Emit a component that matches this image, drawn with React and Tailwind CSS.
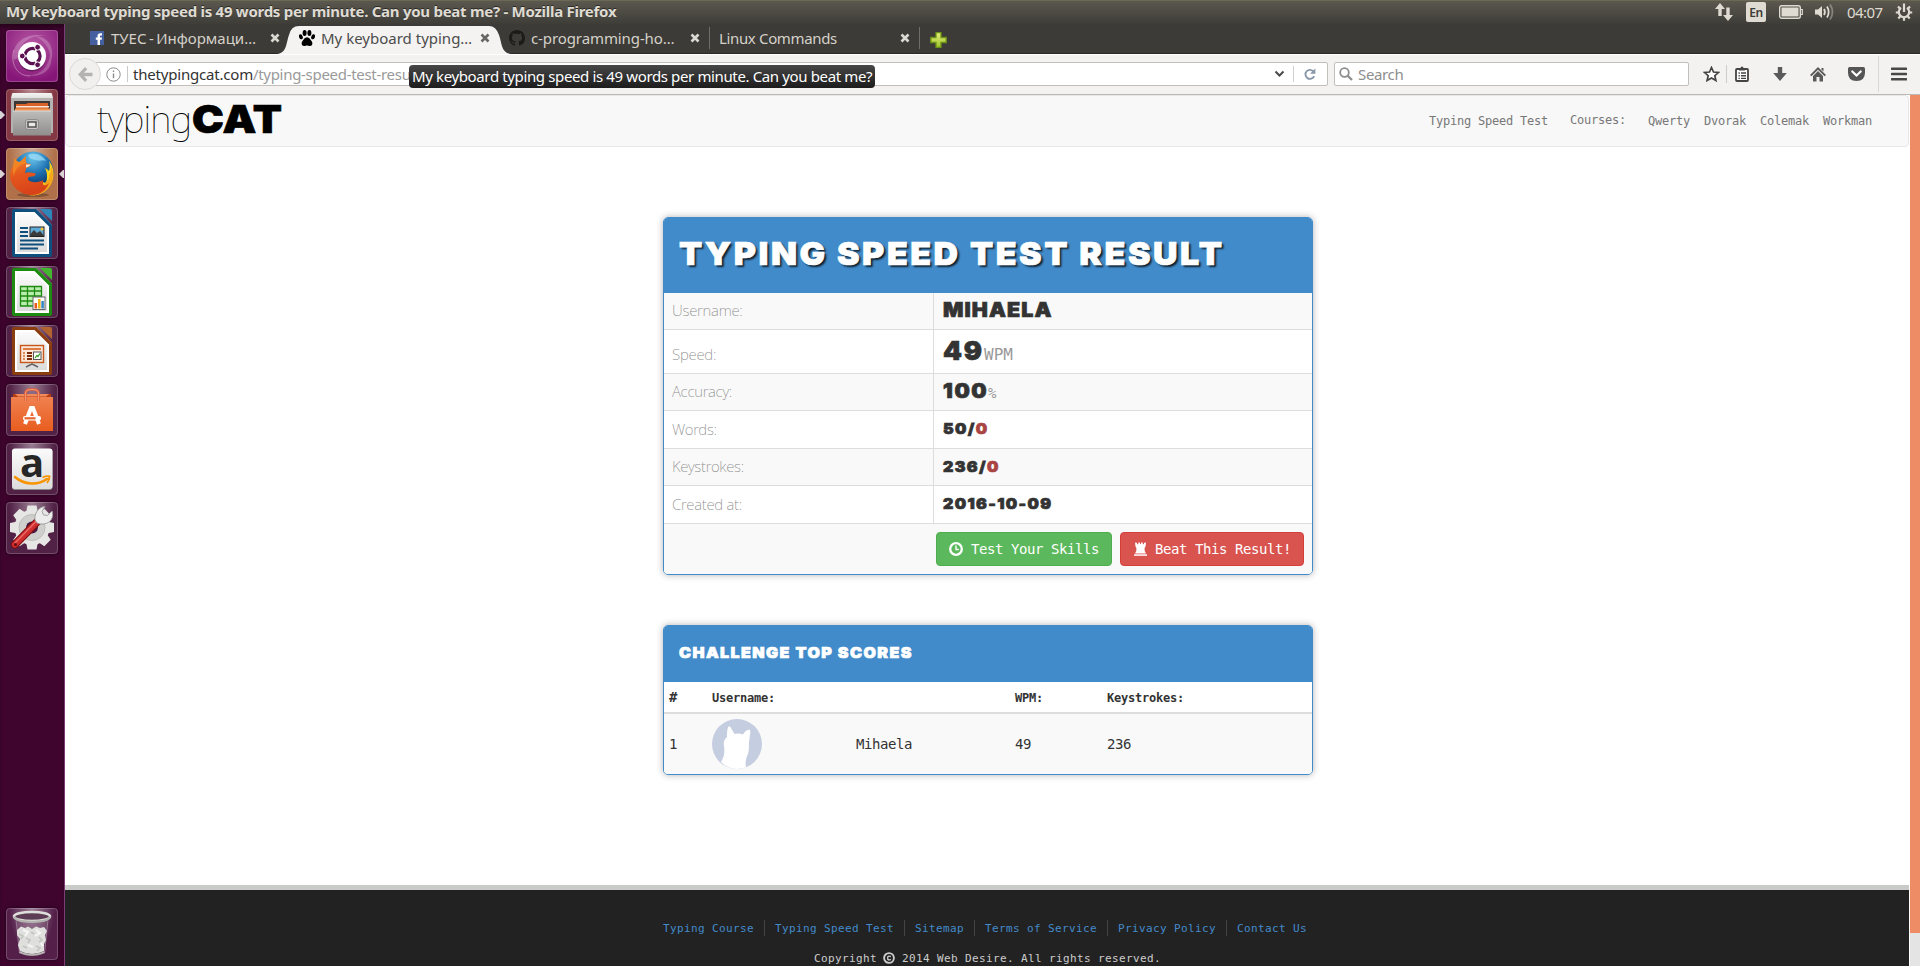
import React from "react";

const UI = "font-['Noto_Sans',sans-serif]";
const MONO = "font-['DejaVu_Sans_Mono',monospace]";
const DISPLAY = "inline-block origin-left font-['Inter',sans-serif] font-black [-webkit-text-stroke:0.7px]";

/* ---------- launcher icons ---------- */

const UbuntuIcon = () => (
  <g>
    <rect x="0" y="0" width="52" height="52" rx="3" fill="url(#dash)" />
    <path d="M8 30C4 12 22 2 40 6C26 4 12 12 12 28ZM44 22C50 40 34 50 18 44C32 48 44 38 44 22ZM28 6C44 6 50 20 44 34C46 22 40 10 28 6Z" fill="#fff" opacity=".22" />
    <path d="M24 46C10 46 4 32 8 20" stroke="#fff" strokeWidth="1" opacity=".35" fill="none" />
    <circle cx="26" cy="27.500" r="14" fill="#2b0a28" opacity=".4" />
    <circle cx="26" cy="26" r="14" fill="#fff" />
    <circle cx="26.500" cy="26" r="7.600" fill="none" stroke="#5b1250" strokeWidth="3.200" />
    <path d="M26.500 26L14 26M26.500 26L33 15M26.500 26L33 37" stroke="#fff" strokeWidth="1.600" />
    <circle cx="26.500" cy="26" r="5.500" fill="#fff" />
    <circle cx="16.300" cy="26" r="2.900" fill="#5b1250" stroke="#fff" strokeWidth="1" />
    <circle cx="31.600" cy="17.200" r="2.900" fill="#5b1250" stroke="#fff" strokeWidth="1" />
    <circle cx="31.600" cy="34.800" r="2.900" fill="#5b1250" stroke="#fff" strokeWidth="1" />
  </g>
);

const FilesIcon = () => (
  <g>
    <path d="M6 5Q6 4 7 4H45Q46 4 46 5L47 9V44H5V9Z" fill="url(#steel)" />
    <rect x="5" y="9" width="42" height="35" fill="#b5b3b1" />
    <rect x="8" y="12" width="36" height="12" fill="#3b3835" />
    <path d="M10 15H20L22 14H42V24H10Z" fill="#d9622a" />
    <rect x="10" y="17" width="33" height="1.500" fill="#f6e6d8" />
    <rect x="9" y="19.500" width="35" height="4" fill="#ef9450" />
    <path d="M7 22H45V46.500H7Z" fill="url(#steel2)" />
    <path d="M7 22H45" stroke="#dcdcdb" />
    <rect x="19.500" y="30.500" width="13" height="10" rx="2.500" fill="#c9c9c8" stroke="#8c8b89" />
    <rect x="22" y="33" width="8" height="5" fill="#e9e9e8" stroke="#3e3d3b" strokeWidth="1.300" />
  </g>
);

const FirefoxIcon = () => (
  <g>
    <ellipse cx="27" cy="47" rx="16" ry="2" fill="#000" opacity=".25" />
    <circle cx="27" cy="24" r="20.500" fill="url(#globe)" />
    <path d="M22 7C29 4 36 7 40 13C36 11 34 14 30 12C26 11 23 11 22 7Z" fill="#9edcf5" opacity=".75" />
    <path d="M43 13C48 19 49 28 45 36C40 45 31 48.500 23 47C32 45 36 40 37 34C39 36 41 34 41 30C41 26 41 24 39 20C41 21 42 22 43 23C44 20 44 17 43 13Z" fill="#fbd31c" />
    <path d="M45 18C49 27 47 38 38 44C34 46.500 29 48 24 47C33 45 38 40 39 35C42 33 44 30 43 26C45 27 45 22 45 18Z" fill="#f5a51a" />
    <path d="M9 10C10 13 12 14 14 14L20 8C20 11 19 14 21 15.500L25 16C25 18 22 19 20 20.500C20 22 19 24 19 25C23 23 26 25 30 25.500C29 29 26 28 23 29C21 30 22 33 25 33.500C29 35 34 34 37 32C36 38 39 39 43 35C40 43 33 47.500 25 47C14 46.500 4 38 4 27C4 22 6 19 8 17C8 14 8 12 9 10Z" fill="url(#fox)" />
    <path d="M9 10C10 13 12 14 14 14L20 8C19 11 19 14 21 15.500C15 15 9 20 8 28C6 23 7 15 9 10Z" fill="#f58a22" opacity=".8" />
    <path d="M20 16.500H25C24 18 22 19 20 19.500Z" fill="#fbe3c5" />
  </g>
);

const Doc = ({ dark, light, children }) => (
  <g>
    <path d="M6 4Q6 2 8 2H30L46 18V48Q46 50 44 50H8Q6 50 6 48Z" fill={dark} />
    <path d="M9 5H28.500L43 19.500V47H9Z" fill="#fff" />
    <path d="M11 7H27.500L41 20.500V45H11Z" fill="url(#paper)" />
    <path d="M34 2H44Q46 2 46 4V14Z" fill={light} />
    <path d="M30 2L46 18" stroke={light} strokeWidth="1" opacity=".6" />
    {children}
  </g>
);

const WriterIcon = () => (
  <Doc dark="#0f4f7e" light="#2f86b8">
    <path d="M14 21H22M14 25H22M14 29H22M14 33.500H38M14 37.500H38M14 41.500H32" stroke="#0f4f7e" strokeWidth="1.900" />
    <rect x="24" y="20" width="14" height="9.500" fill="#5fa9d6" stroke="#222" />
    <path d="M24.500 29V27L28 23L31 26L34 24L37.500 28V29Z" fill="#3b3b3b" />
    <circle cx="36" cy="22" r="1.500" fill="#f2c230" />
  </Doc>
);

const CalcIcon = () => (
  <Doc dark="#1d8a12" light="#43b52f">
    <rect x="14" y="20" width="22" height="20" fill="#b9edae" />
    <path d="M14.500 20.500H35.500V40H14.500ZM21.500 20.500V40M28.500 20.500V40M14.500 25H35.500M14.500 30H35.500M14.500 35H35.500" stroke="#1d8a12" strokeWidth="1.300" fill="none" />
    <rect x="27" y="31" width="12" height="12.500" fill="#fff" stroke="#666" />
    <rect x="28.500" y="37" width="2.600" height="5.500" fill="#e85a1c" />
    <rect x="32" y="33" width="2.600" height="9.500" fill="#f2b416" />
    <rect x="35.300" y="35" width="2.600" height="7.500" fill="#3a87c8" />
  </Doc>
);

const ImpressIcon = () => (
  <Doc dark="#8a3d0f" light="#b3652f">
    <rect x="14.500" y="20.500" width="23" height="17" fill="#fbe6d8" stroke="#c4581b" strokeWidth="1.400" />
    <path d="M17 24H35" stroke="#d9702f" strokeWidth="1.800" />
    <path d="M17 28H19M17 31H19M17 34H19" stroke="#e08a58" strokeWidth="1.800" />
    <path d="M21 28H26M21 31H26M21 34H26" stroke="#7c2e0c" strokeWidth="1.800" />
    <rect x="27.500" y="27" width="7.500" height="7.500" fill="#fff" stroke="#555" />
    <path d="M29 33L31 30.500L32 31.500L34 28.500" stroke="#2f9a26" strokeWidth="1.200" fill="none" />
    <path d="M26 38V40M20 42L26 39L32 42" stroke="#666" strokeWidth="1.600" fill="none" />
  </Doc>
);

const SoftwareIcon = () => (
  <g>
    <path d="M7 10H45V15H7Z" fill="#b63f12" />
    <path d="M9 10L12 12.500H40L43 10" fill="#f08a5a" />
    <path d="M5 13H47V47H5Z" fill="url(#bag)" />
    <path d="M19.500 17V9Q20 5.500 24 5.500H28Q32 5.500 32.500 9V17" stroke="#e0613a" strokeWidth="2.600" fill="none" />
    <path d="M19.500 17V9Q20 5.500 24 5.500H28Q32 5.500 32.500 9V17" stroke="#f7a27c" strokeWidth=".8" fill="none" />
    <path d="M19 40L25 24H27L33 40" stroke="#fff" strokeWidth="4" fill="none" />
    <rect x="17" y="32" width="18" height="4.600" rx="2" fill="#fff" />
    <rect x="18.500" y="33.200" width="11" height="2.200" fill="#e8662f" />
  </g>
);

const AmazonIcon = () => (
  <g>
    <rect x="6" y="6" width="40.500" height="41" rx="3" fill="#8c8a88" />
    <rect x="6" y="5.500" width="40.500" height="40.500" rx="3" fill="url(#paper)" />
    <path d="M9 34C18 42 32 42.500 41 36" stroke="#f79400" strokeWidth="2.500" fill="none" strokeLinecap="round" />
    <path d="M36.500 34.500Q41 32.500 43.500 33.500Q43.500 37 41 40" stroke="#f79400" strokeWidth="1.900" fill="none" />
  </g>
);

const SettingsIcon = () => (
  <g>
    <g fill="#e6e6e5">
      {[0, 45, 90, 135].map((a) => (
        <path key={a} d="M21.500 3.500H30.500L32 11V40L30.500 47.500H21.500L20 40V11Z" transform={`rotate(${a} 26 25.500)`} />
      ))}
      <circle cx="26" cy="25.500" r="17.500" />
    </g>
    <circle cx="26" cy="25.500" r="13" fill="#cfcfce" stroke="#bdbdbc" />
    <circle cx="26" cy="25.500" r="6" fill="#4b1a41" />
    <path d="M9 42.500L32 19" stroke="#7d0f12" strokeWidth="8" strokeLinecap="round" />
    <path d="M9 42.500L32 19" stroke="#cf2d2d" strokeWidth="6" strokeLinecap="round" />
    <path d="M9 41L31 18.500" stroke="#ea6a66" strokeWidth="1.400" strokeLinecap="round" />
    <path d="M29 18C28 12 32 5 39 4.500L36 9.500L37.500 13L41.500 13.500L46 9C48 15 45 21 38 22L34 22L31 21Z" fill="#ececec" stroke="#9a9a99" strokeWidth=".9" />
    <circle cx="9.500" cy="42.500" r="1.500" fill="#5e0c0e" />
  </g>
);

const TrashIcon = () => (
  <g>
    <path d="M10 10L13 45Q26 51 39 45L42 10Z" fill="#fff" opacity=".1" />
    <path d="M10 12L13.500 45Q26 50 38.500 45L42 12" stroke="#d9cfd6" strokeWidth=".8" fill="none" opacity=".5" />
    <path d="M11 22L15 18.500L19 20L22 18.500L26 21L30 18.500L34 20L38 19L41 23L39 27L40 32L38 36L38 43Q26 49 14 43L12 37L14 31L11 27Z" fill="#dfe0dd" />
    <path d="M13 26L17 28L15 31M20 30L24 32L22 35M33 29L36 32L33 34M17 38L21 40M30 38L34 40L31 43M25 24L28 26" stroke="#c2c4bf" strokeWidth="1.600" fill="none" />
    <path d="M17 22L22 24L19 28M30 22L34 25L29 28M22 37L27 39M35 35L37 38" stroke="#f6f6f4" strokeWidth="2" fill="none" />
    <path d="M13.500 44Q26 50 38.500 44" stroke="#b9b9b6" strokeWidth="1.500" fill="none" />
    <ellipse cx="26" cy="8.500" rx="18" ry="4.500" fill="#5d3d56" stroke="#dededb" strokeWidth="2.600" />
    <path d="M8 8.500Q9 13.500 26 13.800Q43 13.500 44 8.500" stroke="#b3b3b0" strokeWidth="2.200" fill="none" />
  </g>
);

const TILES = [
  { id: "dash", bg: "bg-[#8b1f7c]", icon: UbuntuIcon },
  { id: "files", bg: "bg-[#843843]", icon: FilesIcon, left: true },
  { id: "firefox", bg: "bg-[#b0714a]", icon: FirefoxIcon, left: true, right: true },
  { id: "writer", bg: "bg-[#512146]", icon: WriterIcon },
  { id: "calc", bg: "bg-[#512146]", icon: CalcIcon },
  { id: "impress", bg: "bg-[#512146]", icon: ImpressIcon },
  { id: "software", bg: "bg-[#512146]", icon: SoftwareIcon },
  { id: "amazon", bg: "bg-[#512146]", icon: AmazonIcon, letter: "a" },
  { id: "settings", bg: "bg-[#512146]", icon: SettingsIcon },
];

function Tile({ bg, icon: Icon, left, right, letter }) {
  return (
    <div className="relative h-[52px] w-full shrink-0 pl-1.5">
      <div className={`relative size-[52px] rounded-[4px] shadow-[0_0_5px_rgba(0,0,0,0.5)] ${bg}`}>
        <div className="absolute inset-0 rounded-[4px] bg-[radial-gradient(ellipse_at_50%_0%,rgba(255,255,255,0.42),rgba(255,255,255,0)_62%)]" />
        <svg className="absolute inset-0" width="52" height="52" viewBox="0 0 52 52">
          <Icon />
        </svg>
        {letter && (
          <span className="absolute inset-x-0 top-[-8px] text-center font-['Open_Sans',sans-serif] text-[40px] leading-[54px] font-bold text-[#262626]">
            {letter}
          </span>
        )}
        <div className="absolute inset-0 rounded-[4px] border border-white/20" />
      </div>
      {left && (
        <svg className="absolute top-[22px] left-0" width="5" height="8" viewBox="0 0 5 8">
          <path d="M0 0H1L5 4L1 8H0Z" fill="#d8d4d6" />
        </svg>
      )}
      {right && (
        <svg className="absolute top-[22px] right-0" width="5" height="8" viewBox="0 0 5 8">
          <path d="M5 0H4L0 4L4 8H5Z" fill="#d8d4d6" />
        </svg>
      )}
    </div>
  );
}

function Launcher() {
  return (
    <aside className="flex w-[65px] shrink-0 flex-col justify-between border-r border-[#7d3c76] bg-[#40052f] pt-1.5 pb-1.5 shadow-[inset_0_3px_3px_rgba(0,0,0,0.35)]">
      <svg className="absolute size-0">
        <defs>
          <radialGradient id="dash" cx=".5" cy=".3" r=".7"><stop offset="0" stopColor="#b85aa6" /><stop offset="1" stopColor="#861678" /></radialGradient>
          <linearGradient id="steel" x2="0" y2="1"><stop offset="0" stopColor="#f4f4f3" /><stop offset=".25" stopColor="#cfcfce" /><stop offset="1" stopColor="#9a9998" /></linearGradient>
          <linearGradient id="steel2" x2="0" y2="1"><stop offset="0" stopColor="#bdbcbb" /><stop offset="1" stopColor="#8f8e8d" /></linearGradient>
          <radialGradient id="globe" cx=".5" cy=".15" r=".8"><stop offset="0" stopColor="#6cc7ec" /><stop offset=".5" stopColor="#1c70b0" /><stop offset="1" stopColor="#0b2a5c" /></radialGradient>
          <linearGradient id="fox" x2=".3" y2="1"><stop offset="0" stopColor="#f08a2c" /><stop offset=".5" stopColor="#e5571d" /><stop offset="1" stopColor="#d8431a" /></linearGradient>
          <linearGradient id="paper" x2="0" y2="1"><stop offset="0" stopColor="#fbfbfb" /><stop offset="1" stopColor="#dcdcdc" /></linearGradient>
          <linearGradient id="bag" x2="0" y2="1"><stop offset="0" stopColor="#f08150" /><stop offset="1" stopColor="#e95d1f" /></linearGradient>
          <linearGradient id="plus" x2="0" y2="1"><stop offset="0" stopColor="#e6ef7c" /><stop offset="1" stopColor="#9cc22c" /></linearGradient>
        </defs>
      </svg>
      <div className="flex flex-col gap-[7px]">
        {TILES.map(({ id, ...tile }) => <Tile key={id} {...tile} />)}
      </div>
      <Tile bg="bg-[#54204a]" icon={TrashIcon} />
    </aside>
  );
}

/* ---------- desktop top bar ---------- */

function TopPanel() {
  return (
    <header className={`flex h-6 shrink-0 items-start border-t border-[#6b6954] bg-linear-to-b from-[#5b584f] to-[#3e3d38] pl-1.5 text-[#dfdbd2] ${UI}`}>
      <span className="text-[15px] leading-[21px] font-bold tracking-[-0.27px] whitespace-pre [text-shadow:0_-1px_0_#2b2a26]">
        My keyboard typing speed is 49 words per minute. Can you beat me? - Mozilla Firefox
      </span>
      <div className="ml-auto flex h-[22px] items-center pr-[7px]">
        <svg width="18" height="18" viewBox="0 0 18 18" fill="#dfdbd2">
          <path d="M5 0L10 6H6.700V13H3.300V6H0ZM13 18L18 12H14.700V4.500H11.300V12H8Z" />
        </svg>
        <span className="ml-[13px] h-5 w-5 rounded-[2px] bg-[#dfdbd2] text-center text-[12px] leading-[21px] font-semibold tracking-[-0.4px] text-[#3c3b37]">En</span>
        <svg className="ml-[13px]" width="24" height="14" viewBox="0 0 24 14">
          <rect x=".7" y=".7" width="20.600" height="12.600" rx="2" fill="none" stroke="#dfdbd2" strokeWidth="1.400" />
          <rect x="2.500" y="2.500" width="17" height="9" fill="#dfdbd2" />
          <path d="M22 4.500H23.300V9.500H22" stroke="#dfdbd2" strokeWidth="1.200" fill="none" />
        </svg>
        <svg className="ml-3" width="20" height="18" viewBox="0 0 20 18" fill="none" stroke="#dfdbd2" strokeWidth="1.800">
          <path d="M0 6.500H3L7 3V15L3 11.500H0Z" fill="#dfdbd2" stroke="none" />
          <path d="M9 6Q10.800 9 9 12M12 3.500Q15.300 9 12 14.500" />
          <path d="M15 1.500Q20 9 15 16.500" opacity=".4" />
        </svg>
        <span className="ml-3 w-[36px] text-[15px] leading-[20px] tracking-[-0.55px]">04:07</span>
        <svg className="ml-[12px]" width="18" height="18" viewBox="0 0 18 18" fill="none" stroke="#dfdbd2">
          <path d="M6 4.800A5.200 5.200 0 1 0 12 4.800" strokeWidth="2.200" />
          <path d="M9 .5V9" strokeWidth="2.200" />
          <path d="M.8 9.500H4M14 9.500H17.200M3 3.500L5.200 5.700M15 3.500L12.800 5.700M3.300 15.400L5.300 13.300M14.700 15.400L12.700 13.300M9 14.500V17.800" strokeWidth="2.200" />
        </svg>
      </div>
    </header>
  );
}

/* ---------- browser chrome ---------- */

const Close = ({ className }) => (
  <svg className={`shrink-0 ${className}`} width="10" height="10" viewBox="0 0 10 10">
    <path d="M1.500 1.500L8.500 8.500M8.500 1.500L1.500 8.500" stroke="currentColor" strokeWidth="2.600" />
  </svg>
);

const TAB_TEXT = "text-[15px] leading-5 whitespace-pre";

function TabBar() {
  return (
    <div className={`flex h-[30px] shrink-0 items-stretch border-b border-[#2a2925] bg-[#3c3b37] text-[#d5d1c9] ${UI}`}>
      <div className="flex w-[216px] items-center pt-px pb-[2px] pl-[25px]">
        <svg width="14" height="14" viewBox="0 0 14 14">
          <rect width="14" height="14" fill="#4460a0" />
          <path d="M7.500 14V8.700H5.800V6.600H7.500V5Q7.500 2.200 10.200 2.200H12V4.400H10.800Q10 4.400 10 5.300V6.600H12L11.700 8.700H10V14Z" fill="#fff" />
        </svg>
        <span className={`ml-[7px] w-[159px] tracking-[0px] [word-spacing:-1.5px] ${TAB_TEXT}`}>ТУЕС - Информаци…</span>
        <Close className="text-[#dcd9d2]" />
      </div>
      <div className="relative -ml-1 flex w-[232px] items-center pt-px pb-[2px] pl-[22px] text-[#4c4c4c]">
        <svg className="absolute top-[2px] left-0" width="234" height="28" viewBox="0 0 234 28">
          <path d="M0 28C10 27 9 17 12 9Q14 0 22 0H212Q219 0 222 9C225 17 224 27 234 28Z" fill="#f4f3f1" />
        </svg>
        <svg className="relative" width="16" height="16" viewBox="0 0 16 16" fill="#000">
          <ellipse cx="5.600" cy="3" rx="2" ry="3" /><ellipse cx="10.400" cy="3" rx="2" ry="3" />
          <ellipse cx="1.900" cy="6.800" rx="1.800" ry="2.600" transform="rotate(-20 1.900 6.800)" /><ellipse cx="14.100" cy="6.800" rx="1.800" ry="2.600" transform="rotate(20 14.100 6.800)" />
          <path d="M8 7.200C10.500 7.200 11 9.500 12.500 11C14 12.800 13.500 16 11 16C9.500 16 9 15.400 8 15.400C7 15.400 6.500 16 5 16C2.500 16 2 12.800 3.500 11C5 9.500 5.500 7.200 8 7.200Z" />
        </svg>
        <span className={`relative ml-1.5 w-[159px] tracking-[0px] ${TAB_TEXT}`}>My keyboard typing…</span>
        <Close className="relative text-[#666]" />
      </div>
      <div className="flex w-[201px] items-center pt-px pb-[2px]">
        <svg width="16" height="16" viewBox="0 0 16 16" fill="#1b1b1a">
          <path d="M8 0C3.580 0 0 3.580 0 8c0 3.540 2.290 6.530 5.470 7.590.4.070.55-.17.55-.38 0-.19-.01-.82-.01-1.490-2.010.37-2.530-.49-2.690-.94-.09-.23-.48-.94-.82-1.130-.28-.15-.68-.52-.01-.53.63-.01 1.080.58 1.230.82.72 1.210 1.870.87 2.330.66.07-.52.28-.87.51-1.070-1.780-.2-3.640-.89-3.640-3.950 0-.87.31-1.590.82-2.150-.08-.2-.36-1.020.08-2.120 0 0 .67-.21 2.200.82.64-.18 1.320-.27 2-.27s1.360.09 2 .27c1.530-1.040 2.200-.82 2.200-.82.44 1.100.16 1.920.08 2.120.51.56.82 1.270.82 2.150 0 3.070-1.870 3.750-3.650 3.950.29.25.54.73.54 1.480 0 1.070-.01 1.930-.01 2.200 0 .21.15.46.55.38A8.010 8.010 0 0 0 16 8c0-4.420-3.580-8-8-8z" />
        </svg>
        <span className={`ml-1.5 w-[159px] tracking-[-0.1px] ${TAB_TEXT}`}>c-programming-ho…</span>
        <Close className="text-[#dcd9d2]" />
        <span className="ml-[9px] h-[22px] w-px bg-[#6f6e69]" />
      </div>
      <div className="flex w-[210px] items-center pt-px pb-[2px] pl-[9px]">
        <span className={`w-[181px] tracking-[-0.35px] ${TAB_TEXT}`}>Linux Commands</span>
        <Close className="text-[#dcd9d2]" />
        <span className="ml-[9px] h-[22px] w-px bg-[#6f6e69]" />
      </div>
      <svg className="mt-2 ml-[10px]" width="17" height="16" viewBox="0 0 17 16">
        <path d="M6 .7H11V5.500H16.200V10.500H11V15.300H6V10.500H.8V5.500H6Z" fill="url(#plus)" stroke="#6d9316" strokeWidth="1.300" />
      </svg>
    </div>
  );
}

function NavBar() {
  return (
    <div className={`relative flex h-[41px] shrink-0 items-center border-t border-b border-t-white border-b-[#bcb8b3] bg-[#f3f2f0] pb-px pl-1 ${UI}`}>
      <div className="relative z-10 flex size-8 items-center justify-center rounded-full border border-[#dcdad7] bg-[#f1f0ee]">
        <svg width="15" height="15" viewBox="0 0 15 15">
          <path d="M0 7.500L7 0L9.300 2.300L6 5.800H14.500V9.200H6L9.300 12.700L7 15Z" fill="#b4b3b1" />
        </svg>
      </div>
      <div className="-ml-[6px] flex h-6 w-[1233px] items-center rounded-[2px] border border-[#c3c0bb] bg-white pl-[10px] text-[15px]">
        <svg width="15" height="15" viewBox="0 0 15 15" fill="none" stroke="#8b8b8b">
          <circle cx="7.500" cy="7.500" r="6.700" />
          <path d="M7.500 6.500V11.300M7.500 3.500V5" strokeWidth="1.400" />
        </svg>
        <span className="ml-[6px] h-4 w-px bg-[#c9c9c9]" />
        <span className="ml-[5px] leading-5 tracking-[-0.2px] text-[#333]">thetypingcat.com</span>
        <span className="leading-5 tracking-[-0.3px] text-[#9a9a9a]">/typing-speed-test-results</span>
        <svg className="mr-[1px] ml-auto" width="11" height="8" viewBox="0 0 11 8">
          <path d="M1.500 1.500L5.500 5.500L9.500 1.500" stroke="#4a4a4a" strokeWidth="2" fill="none" />
        </svg>
        <span className="ml-[7px] h-4 w-px bg-[#d0d0d0]" />
        <svg className="mr-[11px] ml-[10px]" width="12" height="13" viewBox="0 0 13 13">
          <path d="M10.500 3.500A4.900 4.900 0 1 0 11 8.300" stroke="#8897a8" strokeWidth="2" fill="none" />
          <path d="M12.300 0V5.800H6.500Z" fill="#8897a8" />
        </svg>
      </div>
      <div className="ml-[6px] flex h-6 w-[355px] items-center rounded-[2px] border border-[#c3c0bb] bg-white pl-[4px]">
        <svg width="14" height="14" viewBox="0 0 14 14" fill="none" stroke="#8d8d8d">
          <circle cx="5.500" cy="5.500" r="4.300" strokeWidth="1.800" />
          <path d="M8.700 8.700L13 13" strokeWidth="2.300" />
        </svg>
        <span className="ml-[5px] text-[15px] leading-5 tracking-[-0.35px] text-[#8e8e8e]">Search</span>
      </div>
      <svg className="ml-[14px]" width="17" height="16" viewBox="0 0 17 16">
        <path d="M8.500 1.500L10.500 6L15.500 6.500L11.800 9.700L12.900 14.500L8.500 12L4.100 14.500L5.200 9.700L1.500 6.500L6.500 6Z" fill="#fff" stroke="#444" strokeWidth="1.700" />
      </svg>
      <span className="ml-[6px] h-[18px] w-px bg-[#cfcdc9]" />
      <svg className="ml-2" width="14" height="16" viewBox="0 0 14 16">
        <rect x="1" y="3" width="12" height="12" rx="1" fill="#fff" stroke="#444" strokeWidth="1.800" />
        <path d="M4 4.500V2.500H5.500Q5.500 .5 7 .5T8.500 2.500H10V4.500Z" fill="#444" />
        <path d="M3.500 7H4.800M6 7H11M3.500 9.700H4.800M6 9.700H11M3.500 12.400H4.800M6 12.400H11" stroke="#444" strokeWidth="1.400" />
      </svg>
      <svg className="ml-6" width="14" height="14" viewBox="0 0 14 14">
        <path d="M4.800 0H9.200V6H13.800L7 14L.2 6H4.800Z" fill="#5a5a5a" />
      </svg>
      <svg className="ml-[23px]" width="16" height="15" viewBox="0 0 16 15" fill="#5a5a5a">
        <path d="M8 0L16 8L14.600 9.300L8 2.800L1.400 9.300L0 8Z" />
        <path d="M8 4L13 9V14.500H9.500V10H6.500V14.500H3V9Z" />
        <path d="M11.500 1H13.500V4.500L11.500 2.500Z" />
      </svg>
      <svg className="ml-[22px]" width="17" height="14" viewBox="0 0 17 14">
        <path d="M1.500 0H15.500Q17 0 17 1.500V5.500Q17 14 8.500 14T0 5.500V1.500Q0 0 1.500 0Z" fill="#555" />
        <path d="M4.300 4.500L8.500 8.500L12.700 4.500" stroke="#fff" strokeWidth="2.200" fill="none" strokeLinecap="round" />
      </svg>
      <span className="ml-[13px] h-9 w-px bg-[#dad8d4]" />
      <svg className="mb-px ml-[12px]" width="16" height="14" viewBox="0 0 16 14">
        <path d="M1 1.700H15M1 7H15M1 12.300H15" stroke="#484848" strokeWidth="2.600" strokeLinecap="round" />
      </svg>
      <div className="absolute top-[10px] left-[344px] z-20 h-[23px] w-[466px] rounded-[4px] bg-linear-to-b from-[#474747] to-[#1d1d1d] pl-[3px] text-[15px] leading-[23px] tracking-[-0.37px] whitespace-pre text-white">
        My keyboard typing speed is 49 words per minute. Can you beat me?
      </div>
    </div>
  );
}

/* ---------- page ---------- */

function SiteHeader() {
  return (
    <nav className={`mr-px flex h-[52px] shrink-0 rounded-[4px] border border-[#e7e7e7] bg-[#f8f8f8] pr-[36px] pl-[31px] text-[12px] tracking-[-0.224px] text-[#777] ${MONO}`}>
      <div className="flex items-baseline text-black">
        <span className="w-[95px] font-['Noto_Sans',sans-serif] text-[37px] leading-[46px] font-thin tracking-[-0.9px]">typing</span>
        <span className={`${DISPLAY} scale-x-[1.12] text-[38px] leading-[44px] tracking-[0.2px]`}>CAT</span>
      </div>
      <div className="ml-auto flex pt-[17px] leading-[14px] whitespace-pre">
        <a className="mt-px">Typing Speed Test</a>
        <span className="ml-[22px]">Courses:</span>
        <a className="mt-px ml-[22px]">Qwerty</a>
        <a className="mt-px ml-[14px]">Dvorak</a>
        <a className="mt-px ml-[14px]">Colemak</a>
        <a className="mt-px ml-[14px]">Workman</a>
      </div>
    </nav>
  );
}

const small = `${DISPLAY} scale-x-[1.07] text-[15px] tracking-[1.25px]`;

const ROWS = [
  { label: "Username:", h: "h-[36px]", bg: "bg-[#f9f9f9]", value: <span className={`${DISPLAY} scale-x-[1.07] text-[20px] tracking-[1px]`}>MIHAELA</span> },
  {
    label: "Speed:", h: "h-[43px] pt-[6px]", bg: "bg-white", shift: "pt-[6px]",
    value: (
      <>
        <span className={`${DISPLAY} w-[41px] scale-x-[1.04] text-[26px] tracking-[1.8px]`}>49</span>
        <span className={`text-[16px] text-[#999] ${MONO}`}>WPM</span>
      </>
    ),
  },
  {
    label: "Accuracy:", h: "h-[36px]", bg: "bg-[#f9f9f9]", shift: "pt-[3px]",
    value: (
      <>
        <span className={`${DISPLAY} w-[45px] scale-x-[1.08] text-[20px] tracking-[1.5px]`}>100</span>
        <span className={`text-[14px] text-[#999] ${MONO}`}>%</span>
      </>
    ),
  },
  { label: "Words:", h: "h-[37px]", bg: "bg-white", shift: "pt-[2px]", value: <span className={small}>50/<span className="text-[#a94442]">0</span></span> },
  { label: "Keystrokes:", h: "h-[36px]", bg: "bg-[#f9f9f9]", shift: "pt-[3px]", value: <span className={small}>236/<span className="text-[#a94442]">0</span></span> },
  { label: "Created at:", h: "h-[37px]", bg: "bg-white", shift: "pt-[2px]", value: <span className={small}>2016-10-09</span> },
];

const PANEL = "w-[650px] overflow-hidden rounded-[5px] border border-[#428bca] shadow-[0_0_7px_rgba(0,0,0,0.3)]";

function ResultCard() {
  return (
    <section className={PANEL}>
      <h1 className="h-[75px] bg-[#428bca] pl-[15px] text-white">
        <span className={`${DISPLAY} scale-x-[1.06] pt-[16px] text-[32px] leading-[40px] tracking-[2.4px] whitespace-pre [text-shadow:2px_2px_2px_rgba(0,0,0,0.8)]`}>
          TYPING SPEED TEST RESULT
        </span>
      </h1>
      {ROWS.map((r) => (
        <div key={r.label} className={`flex items-stretch border-b border-[#ddd] ${r.bg}`}>
          <div className={`flex w-[270px] items-center border-r border-[#ddd] pb-px pl-2 font-['Noto_Sans',sans-serif] text-[15px] font-extralight tracking-[-0.25px] text-[#8c8c8c] ${r.h}`}>
            {r.label}
          </div>
          <div className={`flex items-center pl-[9px] ${r.shift || ""}`}>
            <div className="-mt-[3px] flex items-baseline leading-[30px] text-[#333]">{r.value}</div>
          </div>
        </div>
      ))}
      <div className={`flex h-[50px] items-start justify-end gap-2 bg-[#f9f9f9] pt-2 pr-2 text-[14px] tracking-[-0.43px] whitespace-pre text-white ${MONO}`}>
        <button className="flex h-[34px] w-[176px] items-center rounded-[4px] border border-[#4cae4c] bg-[#5cb85c] pl-3">
          <svg width="14" height="14" viewBox="0 0 14 14" fill="none" stroke="#fff">
            <circle cx="7" cy="7" r="5.800" strokeWidth="2.300" />
            <path d="M7 3.500V7.500H9.800" strokeWidth="1.400" />
          </svg>
          <span className="ml-2">Test Your Skills</span>
        </button>
        <button className="flex h-[34px] w-[184px] items-center rounded-[4px] border border-[#d43f3a] bg-[#d9534f] pl-[13px]">
          <svg width="13" height="14" viewBox="0 0 13 14" fill="#fff">
            <path d="M1 .5L2.800 .8L3.300 2.300L4.300 2.200V.5H6V2H7V.5H8.700V2.200L9.700 2.300L10.200 .8L12 .5L11.500 4.500L10.600 6L10.700 9L12 11.500H1L2.300 9L2.400 6L1.500 4.500Z" />
            <rect y="12.300" width="13" height="1.500" />
          </svg>
          <span className="ml-2">Beat This Result!</span>
        </button>
      </div>
    </section>
  );
}

function ScoresCard() {
  const cols = "grid grid-cols-[43px_144px_159px_92px_1fr] items-center pl-[5px]";
  return (
    <section className={`mt-[50px] bg-white ${PANEL}`}>
      <h2 className="h-[56px] bg-[#428bca] pl-[15px] text-white">
        <span className={`${DISPLAY} scale-x-[1.07] pt-[16px] text-[15px] leading-[22px] tracking-[1.33px] whitespace-pre`}>CHALLENGE TOP SCORES</span>
      </h2>
      <div className={`h-[32px] border-b-2 border-[#ddd] pt-px text-[12px] font-bold tracking-[-0.224px] text-[#333] ${cols} ${MONO}`}>
        <span className="text-[14px]">#</span>
        <span>Username:</span>
        <span />
        <span>WPM:</span>
        <span>Keystrokes:</span>
      </div>
      <div className={`h-[60px] bg-[#f9f9f9] text-[14px] tracking-[-0.43px] text-[#333] ${cols} ${MONO}`}>
        <span>1</span>
        <svg width="50" height="50" viewBox="0 0 50 50">
          <circle cx="25" cy="25" r="25" fill="#c5cde0" />
          <path d="M9 43C12 38 13 34 12 27C11 22 13 20 15 18C15 13 15 9 17 7C19 8 20 11 22.500 15C25 14 28 14.500 31 15.500C33 12 36 10 38 11C39 14 37.500 17 37.500 20C36 24 38 28 36 35C34 39 33 43 34 48.300Q29 50 25 50Q15 49.500 9 43Z" fill="#fff" />
        </svg>
        <span>Mihaela</span>
        <span>49</span>
        <span>236</span>
      </div>
    </section>
  );
}

const LINKS = ["Typing Course", "Typing Speed Test", "Sitemap", "Terms of Service", "Privacy Policy", "Contact Us"];

function Footer() {
  return (
    <footer className={`mr-px flex h-[81px] shrink-0 flex-col border-t-[5px] border-[#c9cbc9] bg-[#222] pl-[598px] text-[11px] tracking-[0.378px] whitespace-pre ${MONO}`}>
      <ul className="flex pt-[30px] text-[#428bca]">
        {LINKS.map((l, i) => (
          <li key={l} className={`h-4 leading-[18px] ${i ? "ml-[10px] border-l border-[#444] pl-[10px]" : ""}`}>{l}</li>
        ))}
      </ul>
      <p className="flex items-center pt-[15px] pl-[151px] leading-[15px] text-[#ccc]">
        Copyright
        <svg className="mr-[7px] mb-px ml-[6px]" width="12" height="12" viewBox="0 0 12 12" fill="none" stroke="#ccc">
          <circle cx="6" cy="6" r="4.900" strokeWidth="1.900" />
          <path d="M7.800 4.800Q6 3.200 4.700 5V7Q6 8.800 7.800 7.200" strokeWidth="1.300" />
        </svg>
        2014 Web Desire. All rights reserved.
      </p>
    </footer>
  );
}

export default function App() {
  return (
    <div className="flex h-[966px] w-[1920px] flex-col overflow-hidden bg-white">
      <TopPanel />
      <div className="flex min-h-0 flex-1">
        <Launcher />
        <div className="flex min-w-0 flex-1 flex-col">
          <TabBar />
          <NavBar />
          <div className="flex min-h-0 flex-1">
            <div className="flex flex-1 flex-col bg-white">
              <SiteHeader />
              <main className="flex-1 pt-[70px] pl-[598px]">
                <ResultCard />
                <ScoresCard />
              </main>
              <Footer />
            </div>
            <div className="w-[10px] bg-[#e4e4e4]">
              <div className="h-[838px] bg-[#ee8c66]" />
            </div>
          </div>
        </div>
      </div>
    </div>
  );
}
